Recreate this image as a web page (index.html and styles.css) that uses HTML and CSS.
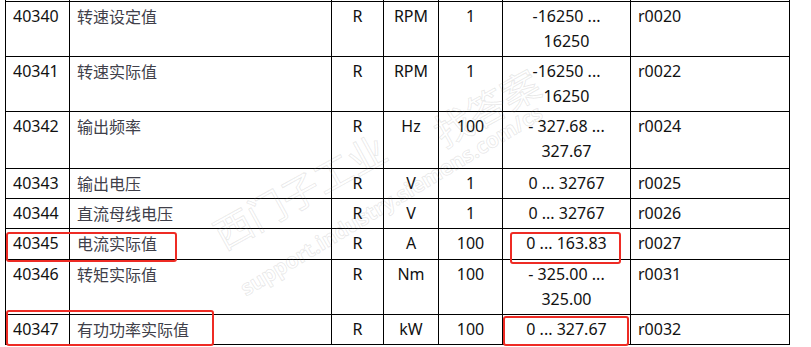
FILE: index.html
```html
<!DOCTYPE html>
<html lang="zh">
<head>
<meta charset="utf-8">
<title>Modbus 寄存器</title>
<link rel="stylesheet" href="styles.css">
</head>
<body>
<div class="sheet">
  <table class="regs">
    <colgroup>
      <col class="c-no"><col class="c-name"><col class="c-acc"><col class="c-unit"><col class="c-scale"><col class="c-range"><col class="c-par">
    </colgroup>
    <tbody>
      <tr class="stub"><td></td><td></td><td></td><td></td><td></td><td></td><td></td></tr>
      <tr><td>40340</td><td class="cn">转速设定值</td><td class="ctr">R</td><td class="ctr">RPM</td><td class="ctr">1</td><td class="ctr">-16250 ...<br>16250</td><td>r0020</td></tr>
      <tr><td>40341</td><td class="cn">转速实际值</td><td class="ctr">R</td><td class="ctr">RPM</td><td class="ctr">1</td><td class="ctr">-16250 ...<br>16250</td><td>r0022</td></tr>
      <tr class="tall"><td>40342</td><td class="cn">输出频率</td><td class="ctr">R</td><td class="ctr">Hz</td><td class="ctr">100</td><td class="ctr">- 327.68 ...<br>327.67</td><td>r0024</td></tr>
      <tr><td>40343</td><td class="cn">输出电压</td><td class="ctr">R</td><td class="ctr">V</td><td class="ctr">1</td><td class="ctr">0 ... 32767</td><td>r0025</td></tr>
      <tr><td>40344</td><td class="cn">直流母线电压</td><td class="ctr">R</td><td class="ctr">V</td><td class="ctr">1</td><td class="ctr">0 ... 32767</td><td>r0026</td></tr>
      <tr class="mid"><td>40345</td><td class="cn">电流实际值</td><td class="ctr">R</td><td class="ctr">A</td><td class="ctr">100</td><td class="ctr">0 ... 163.83</td><td>r0027</td></tr>
      <tr><td>40346</td><td class="cn">转矩实际值</td><td class="ctr">R</td><td class="ctr">Nm</td><td class="ctr">100</td><td class="ctr">- 325.00 ...<br>325.00</td><td>r0031</td></tr>
      <tr><td>40347</td><td class="cn">有功功率实际值</td><td class="ctr">R</td><td class="ctr">kW</td><td class="ctr">100</td><td class="ctr">0 ... 327.67</td><td>r0032</td></tr>
    </tbody>
  </table>

  <div class="mark mark-cn">西门子工业</div>
  <div class="mark mark-url">support.industry.siemens.com/cs</div>
  <div class="mark mark-ask">找答案</div>

  <div class="hl hl-1"></div>
  <div class="hl hl-2"></div>
  <div class="hl hl-3"></div>
  <div class="hl hl-4"></div>
</div>
</body>
</html>
```

FILE: styles.css
```css
html, body {
  margin: 0;
  padding: 0;
  background: #ffffff;
  overflow: hidden;
}

body {
  font-family: "Noto Sans", "Open Sans", "Noto Sans CJK SC", sans-serif;
  font-size: 16px;
  color: #111111;
}

.sheet {
  position: relative;
  width: 811px;
  height: 347px;
  overflow: hidden;
}

.regs {
  margin-top: -16px;
  margin-left: 5px;
  border-collapse: collapse;
  table-layout: fixed;
  width: 784px;
}

.c-no { width: 64px; }
.c-name { width: 262px; }
.c-acc { width: 52px; }
.c-unit { width: 55px; }
.c-scale { width: 64px; }
.c-range { width: 128px; }
.c-par { width: 159px; }

.regs td {
  border: 1px solid #000000;
  padding: 2px 7px 2px 7px;
  line-height: 25px;
  vertical-align: top;
  white-space: nowrap;
}

.regs tr.stub td {
  height: 16px;
  padding: 0;
}

.regs tr.tall td { padding-bottom: 4px; }
.regs tr.mid td { padding-bottom: 3px; }

.regs td.ctr {
  text-align: center;
  padding-left: 2px;
  padding-right: 2px;
}

.regs td.cn {
  font-family: "Noto Sans CJK SC", sans-serif;
  color: #40404a;
  font-size: 16px;
}

/* watermark */
.mark {
  position: absolute;
  white-space: nowrap;
  color: rgba(255, 255, 255, 0);
  -webkit-text-stroke: 1px rgba(120, 120, 120, 0.16);
  transform-origin: left bottom;
  pointer-events: none;
}

.mark-cn {
  left: 226px;
  top: 214px;
  font-family: "Noto Sans CJK SC", sans-serif;
  font-size: 38px;
  line-height: 40px;
  transform: rotate(-29deg);
}

.mark-url {
  left: 248px;
  top: 276px;
  font-family: "Noto Sans", sans-serif;
  font-size: 21px;
  line-height: 24px;
  font-weight: 700;
  transform: rotate(-31deg);
}

.mark-ask {
  left: 446px;
  top: 112px;
  font-family: "Noto Sans CJK SC", sans-serif;
  font-size: 38px;
  line-height: 40px;
  transform: rotate(-29deg);
}

/* red highlight boxes */
.hl {
  position: absolute;
  border: 2px solid #ee2b24;
  border-radius: 3px;
  box-sizing: border-box;
}

.hl-1 { left: 6px; top: 232px; width: 171px; height: 30px; }
.hl-2 { left: 510px; top: 232px; width: 111px; height: 32px; }
.hl-3 { left: 6px; top: 310px; width: 208px; height: 36px; }
.hl-4 { left: 503px; top: 316px; width: 126px; height: 30px; }
```
